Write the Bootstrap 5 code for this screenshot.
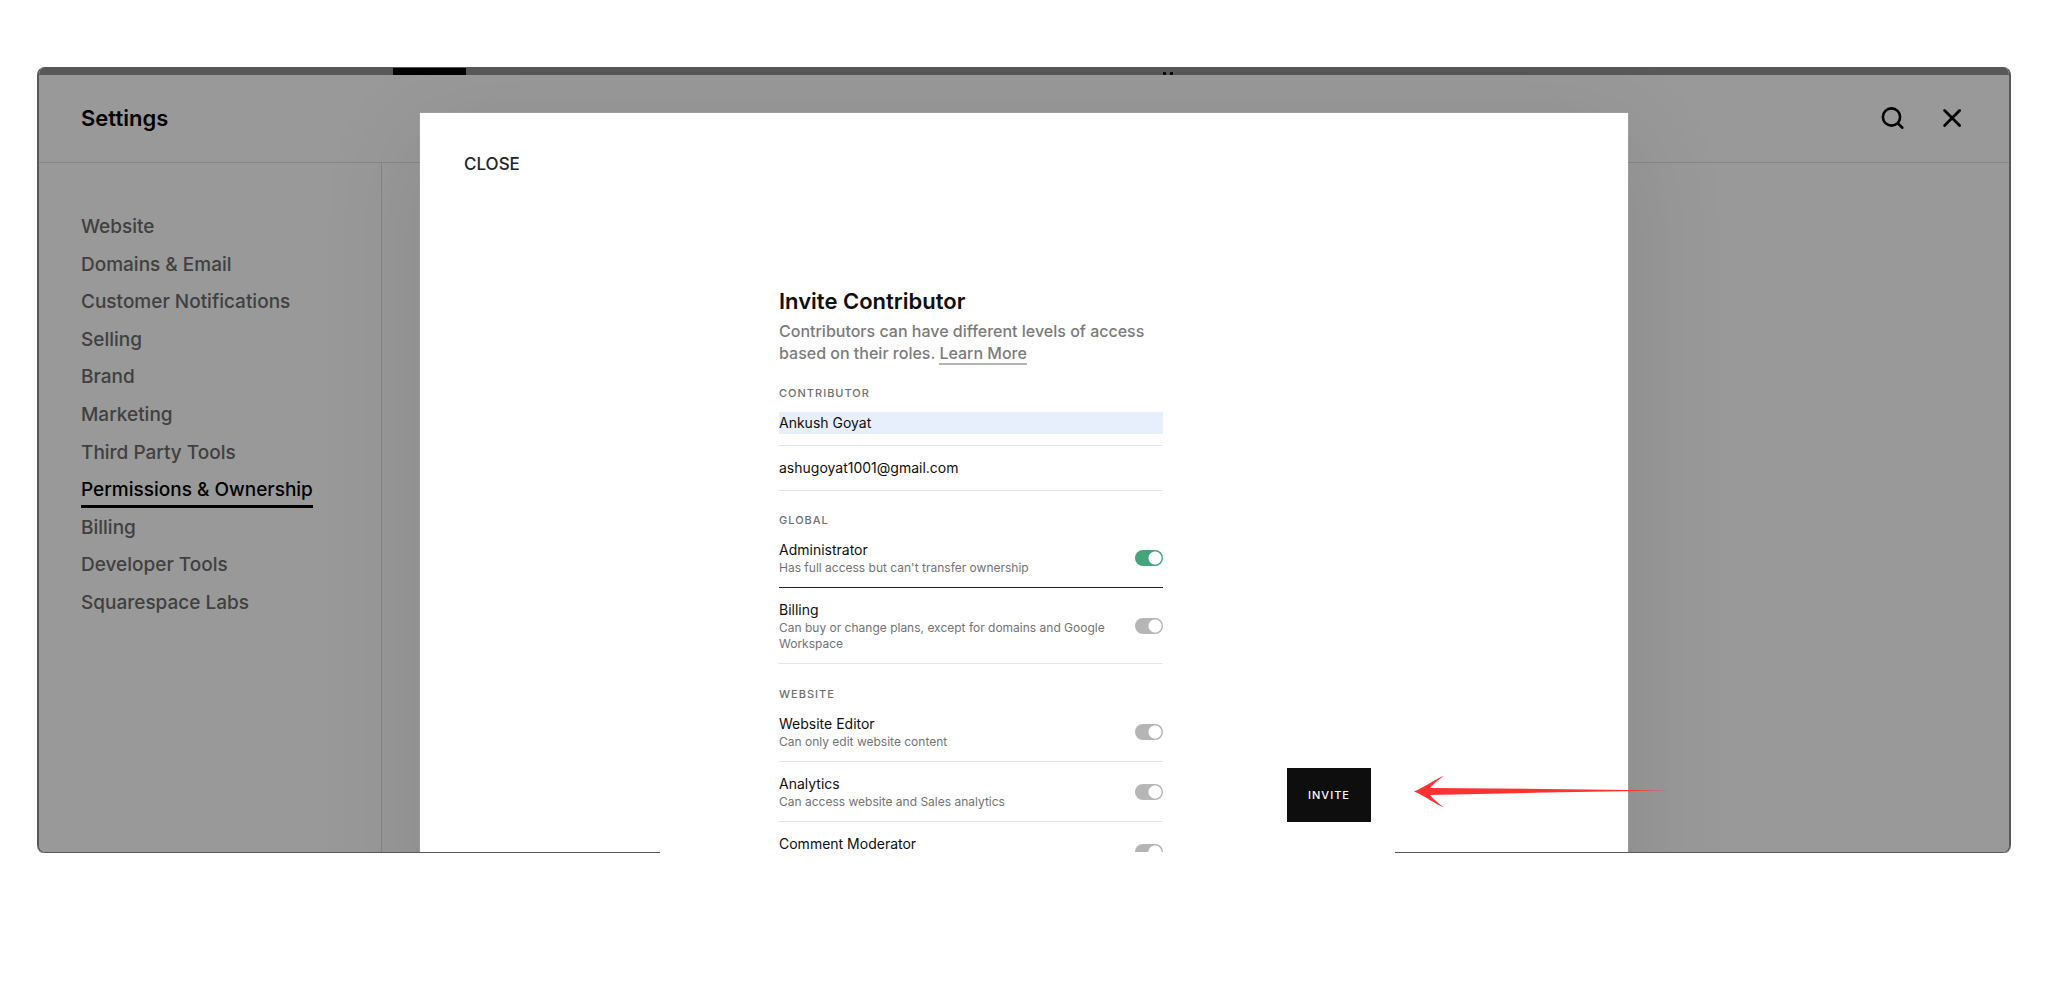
<!DOCTYPE html>
<html lang="en">
<head>
<meta charset="utf-8">
<meta name="viewport" content="width=device-width, initial-scale=1">
<title>Settings – Invite Contributor</title>
<link rel="stylesheet" href="https://cdn.jsdelivr.net/npm/bootstrap@5.3.0/dist/css/bootstrap.min.css">
<style>
  body { font-family: Inter, "Liberation Sans", sans-serif; color: #0e0e0e; background: #fff; }
  .shell { margin: 67px 37px 0; }
  .frame { height: calc(100vh - 222px); border: 2px solid #585858; border-top-width: 0; border-bottom-width: 1px; border-radius: 8px; box-shadow: 0 1px #aaa; }
  .site-strip { height: 8px; background: #939393; }
  .site-tab { width: 73px; height: 7px; margin-left: 354px; background: #000; }
  .site-dots { gap: 4px; margin-left: 697px; }
  .site-dots span { width: 3px; height: 3px; background: #111; }
  .top-bar { height: 88px; padding: 0 45px 2px 42px; border-bottom: 1px solid #e0e0e0; }
  .top-bar h1 { font-size: 22px; line-height: 28px; font-weight: 600; color: #000; }
  .icon-row { gap: 35px; }
  .icon-btn { line-height: 0; color: #000; }
  .side { width: 343px; padding: 49px 42px 0; border-right: 1px solid #e0e0e0; }
  .side-list { height: 406px; }
  .side-list a { font-size: 19px; line-height: 30px; font-weight: 500; color: #6c6c6c; text-decoration: none; display: block; }
  .side-list a.active { color: #000; border-bottom: 3px solid #000; margin-bottom: -3px; }
  .dim { background: rgba(0, 0, 0, .4); }
  .sheet { top: 46px; left: 381px; right: 381px; bottom: -90px; padding: 38px 0 90px 44px; background: #fff; box-shadow: 0 24px 100px rgba(0, 0, 0, .11), 0 0 1px rgba(255, 255, 255, .6); }
  .close-btn { font-size: 17px; line-height: 26px; font-weight: 500; }
  .invite-form { width: 384px; margin: 110px 0 0 315px; }
  .invite-form h2 { font-size: 22px; line-height: 28px; font-weight: 600; margin-bottom: 5px; }
  .intro { font-size: 16px; line-height: 22px; font-weight: 500; color: #7b7b7b; margin-bottom: 21px; white-space: nowrap; }
  .intro a { color: inherit; text-decoration: none; border-bottom: 2px solid #b5b5b5; }
  .group-title { font-size: 11px; line-height: 16px; font-weight: 500; letter-spacing: 1px; color: #6f6f6f; margin: 0; }
  .field + .group-title { margin-top: 21px; }
  .perm + .group-title { margin-top: 22px; }
  .field { padding: 11px 0; border-bottom: 1px solid #e5e5e5; }
  .field input { display: block; width: 100%; height: 22px; padding: 0; border: 0; font-size: 14px; line-height: 22px; color: #0e0e0e; background: #fff; }
  .field input.filled { background: #e8effc; }
  .perm { padding: 12px 0 11px; border-bottom: 1px solid #e5e5e5; }
  .perm.chosen { border-bottom-color: #222; }
  .perm label { font-size: 14px; line-height: 20px; display: block; }
  .perm p { font-size: 12px; line-height: 16px; color: #737373; margin: 0; width: 330px; }
  .toggle { appearance: none; width: 28px; height: 16px; margin: 0; border-radius: 8px; opacity: 1;
    background: radial-gradient(circle at 20px 8px, #fff 6px, transparent 7px) #b5b5b5; }
  .toggle:enabled { background-color: #44a57c; }
  .invite-btn { width: 84px; height: 54px; margin: 0 0 30px 124px; border: 0; background: #0e0e0e; color: #fff; font-size: 11px; font-weight: 500; letter-spacing: 1px; }
  .pointer { left: 1377px; bottom: 45px; }
  .edge { left: 623px; right: 616px; bottom: -1px; height: 2px; background: #fff; border-bottom: 1px solid #e5e5e5; }
</style>
</head>
<body>
<div class="shell position-relative">
  <div class="frame position-relative overflow-hidden">
    <div class="site-strip d-flex align-items-end"><div class="site-tab"></div><div class="site-dots d-flex"><span></span><span></span></div></div>
    <div class="d-flex flex-column h-100">
      <header class="top-bar d-flex align-items-center justify-content-between flex-shrink-0">
        <h1 class="m-0">Settings</h1>
        <div class="icon-row d-flex align-items-center">
          <button class="icon-btn btn p-0 border-0" type="button" aria-label="Search">
            <svg width="24" height="24" viewBox="0 0 24 24" fill="none" stroke="currentColor" stroke-width="2.6" stroke-linecap="round"><circle cx="10.5" cy="11" r="8.6"/><path d="M16.8 17.3l4.6 4.4"/></svg>
          </button>
          <button class="icon-btn btn p-0 border-0" type="button" aria-label="Close settings">
            <svg width="24" height="24" viewBox="0 0 24 24" fill="none" stroke="currentColor" stroke-width="2.8" stroke-linecap="round"><path d="M4.600 4.600l15 15M19.600 4.600l-15 15"/></svg>
          </button>
        </div>
      </header>
      <nav class="side flex-fill">
        <ul class="side-list list-unstyled d-flex flex-column justify-content-between align-items-start m-0">
          <li><a href="#">Website</a></li>
          <li><a href="#">Domains &amp; Email</a></li>
          <li><a href="#">Customer Notifications</a></li>
          <li><a href="#">Selling</a></li>
          <li><a href="#">Brand</a></li>
          <li><a href="#">Marketing</a></li>
          <li><a href="#">Third Party Tools</a></li>
          <li><a href="#" class="active" aria-current="page">Permissions &amp; Ownership</a></li>
          <li><a href="#">Billing</a></li>
          <li><a href="#">Developer Tools</a></li>
          <li><a href="#">Squarespace Labs</a></li>
        </ul>
      </nav>
    </div>
    <div class="dim position-absolute top-0 start-0 w-100 h-100"></div>
    <section class="sheet position-absolute d-flex flex-column" role="dialog" aria-labelledby="sheetTitle">
      <div><button class="close-btn btn p-0 border-0 d-block" type="button">CLOSE</button></div>
      <div class="d-flex flex-fill overflow-hidden">
        <form class="invite-form flex-shrink-0">
          <h2 id="sheetTitle">Invite Contributor</h2>
          <p class="intro">Contributors can have different levels of access<br>based on their roles. <a href="#">Learn More</a></p>
          <h3 class="group-title">CONTRIBUTOR</h3>
          <div class="field"><input class="filled" type="text" value="Ankush Goyat" aria-label="Name"></div>
          <div class="field"><input type="email" value="ashugoyat1001@gmail.com" aria-label="Email"></div>
          <h3 class="group-title">GLOBAL</h3>
          <div class="perm chosen d-flex align-items-center justify-content-between">
            <div><label for="p1">Administrator</label><p>Has full access but can't transfer ownership</p></div>
            <input class="toggle" id="p1" type="checkbox" role="switch" checked>
          </div>
          <div class="perm d-flex align-items-center justify-content-between">
            <div><label for="p2">Billing</label><p>Can buy or change plans, except for domains and Google Workspace</p></div>
            <input class="toggle" id="p2" type="checkbox" role="switch" checked disabled>
          </div>
          <h3 class="group-title">WEBSITE</h3>
          <div class="perm d-flex align-items-center justify-content-between">
            <div><label for="p3">Website Editor</label><p>Can only edit website content</p></div>
            <input class="toggle" id="p3" type="checkbox" role="switch" checked disabled>
          </div>
          <div class="perm d-flex align-items-center justify-content-between">
            <div><label for="p4">Analytics</label><p>Can access website and Sales analytics</p></div>
            <input class="toggle" id="p4" type="checkbox" role="switch" checked disabled>
          </div>
          <div class="perm d-flex align-items-center justify-content-between">
            <div><label for="p5">Comment Moderator</label><p>&nbsp;</p></div>
            <input class="toggle" id="p5" type="checkbox" role="switch" checked disabled>
          </div>
        </form>
        <button class="invite-btn align-self-end" type="button">INVITE</button>
      </div>
    </section>
  </div>
  <div class="edge position-absolute"></div>
  <svg class="pointer position-absolute" width="256" height="34" viewBox="0 0 256 34" fill="#ff3131" aria-hidden="true"><path d="M0 17.5C11 13 21 5 30 2C24 6 19 10 16 14L130 15L255 16.5L130 18.500L16 21C19 25 24 29 30 33.500C21 30 11 22 0 17.500Z"/></svg>
</div>
<script src="https://cdn.jsdelivr.net/npm/bootstrap@5.3.0/dist/js/bootstrap.bundle.min.js"></script>
</body>
</html>
